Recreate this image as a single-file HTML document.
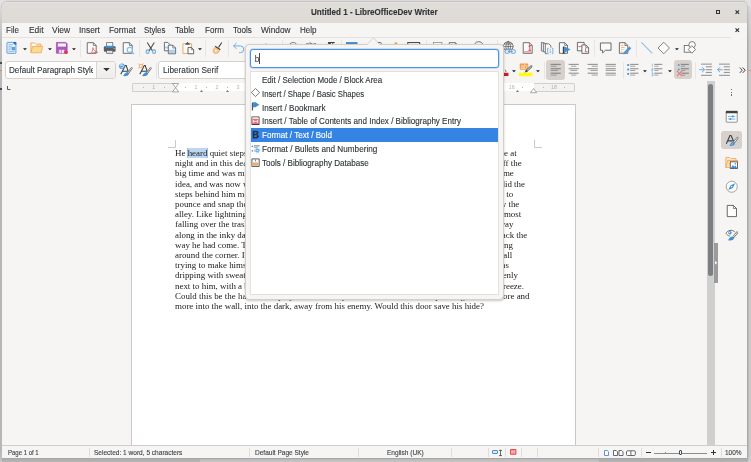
<!DOCTYPE html>
<html><head><meta charset="utf-8"><title>Untitled 1 - LibreOfficeDev Writer</title>
<style>
*{box-sizing:border-box;margin:0;padding:0}
html,body{width:751px;height:462px;overflow:hidden;background:#fff}
body{position:relative;font-family:"Liberation Sans",sans-serif;color:#2e3436}
#shadow{position:absolute;left:0;top:0;width:751px;height:462px;background:#cfcfcf}
.fr{position:absolute}
#win{position:absolute;left:2px;top:2px;width:745px;height:456px;background:#f6f5f4;border-radius:4.5px 4.5px 0 0;overflow:hidden}
#app{position:absolute;left:-2px;top:-2px;width:751px;height:462px;will-change:transform}
.abs,.ic,.sep,.act,.ln,.rn,.rt,.mi,.st{position:absolute}
.ic{overflow:visible}
#title{left:2px;top:2px;width:745px;height:20.8px;background:linear-gradient(#e8e6e3 0,#e0ddd9 1.2px,#dedbd7 100%)}
.ui{position:absolute;line-height:10px;white-space:nowrap;color:#2e3436;-webkit-text-stroke:.1px currentColor}
.t{position:absolute;line-height:10px;color:#2e3436;white-space:nowrap;-webkit-text-stroke:.12px currentColor}
.mi{line-height:10px;white-space:nowrap;color:#2e3436;-webkit-text-stroke:.1px currentColor}
#mline{left:2px;top:36.8px;width:729px;height:1px;background:#e4e2e0}
.sep{width:1px;background:#e8e6e3}
.act{background:#d6d1cc;border-radius:3px}
#combo1{left:4.7px;top:60.6px;width:111.4px;height:18.5px;border:1px solid #d6d2ce;border-radius:3px;background:#fff;overflow:hidden}
#combo1 .tx{position:absolute;left:0;top:0;width:86.9px;height:17px;overflow:hidden}
#combo1 .bt{position:absolute;left:90.4px;top:-1px;width:21px;height:18.5px;border-left:1px solid #d9d5d1;background:linear-gradient(#f6f5f4,#eeecea)}
#combo2{left:158.3px;top:60.6px;width:120px;height:18.5px;border:1px solid #d6d2ce;border-radius:3px;background:#fff}
#combo2 .tx{position:absolute;left:3.8px;top:3.6px;font-size:8.3px;line-height:10px;white-space:nowrap}
/* document area */
#rulerbg{left:174px;top:83.4px;width:361px;height:8px;background:#fff}
#rl{left:132.3px;top:83.2px;width:43px;height:8.6px;background:#f3f2f1;border:1px solid #d2d0cd;border-radius:1.5px 0 0 1.5px;border-right:0}
#rr{left:533.8px;top:83.2px;width:41.5px;height:8.6px;background:#f3f2f1;border:1px solid #d2d0cd;border-radius:0 1.5px 1.5px 0;border-left:0}
.rn{top:84.3px;width:12px;text-align:center;font-size:5.4px;line-height:7px;color:#b2b2b2}
.rt{top:87.4px;width:1px;height:1px;background:#b4b4b4}
#page{left:131.4px;top:104.2px;width:444.6px;height:345px;background:#fff;border:1px solid #c9c9c9}
.ln{left:175.0px;font-family:"Liberation Serif",serif;font-size:8.92px;line-height:10.2px;white-space:nowrap;color:#222}
.lnl{width:150px;overflow:hidden}
.lnr{left:auto}
.sel{background:#bdd6f2;box-shadow:0 0 0 .8px #7fb0ea}
/* scrollbar */
#vtrack{left:706.6px;top:81px;width:8.4px;height:365px;background:#cfcfcf}
#vthumb{left:707.9px;top:83.8px;width:5px;height:192px;background:#7b7f81;border-radius:2.5px}
#handle{left:714.3px;top:242.7px;width:3.5px;height:40px;background:#9b9b9b}
/* status */
#status{left:2px;top:445.4px;width:745px;height:12.6px;background:#f6f5f4;border-top:1px solid #d0cdca}
.st{line-height:8px;white-space:nowrap;color:#3e4345;-webkit-text-stroke:.12px currentColor}
.ssep{position:absolute;top:447.5px;width:1px;height:9px;background:#e0dedb}
/* popup */
#pop{left:244.7px;top:44.3px;width:259.2px;height:255.3px;background:#f6f5f4;border:1px solid #d3d0cc;border-radius:4px;box-shadow:0 1px 2.5px rgba(0,0,0,.22)}
#entry{left:249.8px;top:49.0px;width:249.4px;height:19.1px;background:#fff;border:1.1px solid #4e92e6;border-radius:3px;box-shadow:0 0 0 .5px rgba(90,155,235,.55)}
#entry .tx{position:absolute;left:3.9px;top:4.1px;font-size:8.4px;line-height:10px}
#entry .car{position:absolute;left:8px;top:3.3px;width:.7px;height:10.4px;background:#4a4a4a}
#list{left:249.8px;top:70.9px;width:249.4px;height:224.5px;background:#fff;border:1px solid #e3e1de;overflow:hidden}
.row{position:absolute;left:0;width:247.4px;height:13.9px;font-size:8.4px;line-height:13.9px;white-space:nowrap;color:#2e3436}
.row span{position:absolute;left:11.2px;top:1.5px;display:block;-webkit-text-stroke:.12px currentColor}
.selrow{background:#3584e4;color:#fff}
</style></head><body>
<div id="shadow">
<div class="fr" style="left:0;top:0;width:751px;height:1px;background:#dadada"></div>
<div class="fr" style="left:0;top:1px;width:751px;height:1px;background:#c6c6c6"></div>
<div class="fr" style="left:0;top:0;width:2px;height:462px;background:linear-gradient(#e2e2e2 0,#d2d2d2 14px,#bcbcbc 44px,#b7b7b7 100px,#b7b7b7 452px,#c4c4c4 462px)"></div>
<div class="fr" style="left:747px;top:0;width:1px;height:462px;background:linear-gradient(#d8d8d8 0,#bdbdbd 14px,#a9a9a9 44px,#a8a8a8 456px,#bdbdbd 462px)"></div>
<div class="fr" style="left:748px;top:0;width:1px;height:462px;background:linear-gradient(#dcdcdc 0,#c8c8c8 14px,#bcbcbc 44px,#bbbbbb 456px,#cbcbcb 462px)"></div>
<div class="fr" style="left:749px;top:0;width:2px;height:462px;background:linear-gradient(#e0e0e0 0,#d2d2d2 14px,#cacaca 44px,#c9c9c9 454px,#d6d6d6 462px)"></div>
<div class="fr" style="left:0;top:0;width:6px;height:6px;background:#e2e2e2"></div>
<div class="fr" style="left:745px;top:0;width:6px;height:6px;background:#e2e2e2"></div>
<div class="fr" style="left:1px;top:1px;width:747px;height:9px;border-radius:5.5px 5.5px 0 0;background:linear-gradient(#c4c4c4 0,#c4c4c4 4px,rgba(190,190,190,0) 9px)"></div>
<div class="fr" style="left:2px;top:458px;width:745px;height:1px;background:#a7a7a7"></div>
<div class="fr" style="left:2px;top:459px;width:197.7px;height:3px;background:linear-gradient(#adadad,#b6b6b6)"></div>
<div class="fr" style="left:199.7px;top:459px;width:399.7px;height:3px;background:linear-gradient(#b8b8b8,#c7c7c7)"></div>
<div class="fr" style="left:599.4px;top:459px;width:147.6px;height:3px;background:linear-gradient(#acacac,#b5b5b5)"></div>
<div class="fr" style="left:748px;top:459px;width:3px;height:3px;background:linear-gradient(135deg,#bdbdbd,#dcdcdc)"></div>
<div class="fr" style="left:0;top:62.4px;width:1.6px;height:2px;background:#4a4a4a"></div>
<div class="fr" style="left:0;top:69.6px;width:1.6px;height:1.2px;background:#d9865a"></div>
<div class="fr" style="left:0;top:88.4px;width:1.6px;height:1.4px;background:#3a4a5a"></div>
<div class="fr" style="left:747.6px;top:69.6px;width:3.4px;height:1.2px;background:#e39a78"></div>
</div>
<div id="win"><div id="app">

<div class="abs" id="title"></div>
<!-- window buttons -->
<div class="abs" style="left:715.7px;top:9.9px;width:4.8px;height:4.4px;border:1.3px solid #2e3436"></div>
<svg class="ic" style="left:734.6px;top:9.7px;width:4.6px;height:4.4px" viewBox="0 0 10 10"><path d="M1 1L9 9M9 1L1 9" stroke="#2e3436" stroke-width="2.6"/></svg>
<svg class="ic" style="left:734.6px;top:27.8px;width:4.6px;height:4.4px" viewBox="0 0 10 10"><path d="M1 1L9 9M9 1L1 9" stroke="#2e3436" stroke-width="2.6"/></svg>

<!-- menu -->
<div class="abs" id="mline"></div>

<!-- combos -->
<div class="abs" id="combo1"><div class="tx"><div class="ui" style="left:3.45px;top:3.60px;font-size:8.6px;transform:scaleX(0.9466);transform-origin:0 0">Default Paragraph Style</div></div><div class="bt"></div></div>
<svg class="ic" style="left:103.3px;top:68.1px;width:7px;height:3.3px" viewBox="0 0 10 5"><path d="M0 0H10L5 5Z" fill="#2e3436"/></svg>
<div class="abs" id="combo2"></div>

<!-- toolbars + sidebar icons -->
<svg class="ic" style="left:5.48px;top:41.48px;width:13.44px;height:13.44px" viewBox="0 0 24 24" ><rect x="3.5" y="2.5" width="16" height="19.5" rx="1" fill="#eaf3fc" stroke="#4a8fd0" stroke-width="1.5"/><path d="M6 6.5h8M6 9.5h6M6 12.5h6M6 15.5h4M6 18.5h11" stroke="#7db3e3" stroke-width="1.5"/><rect x="12" y="10.5" width="6" height="6" fill="#5b9bd8"/><circle cx="15.6" cy="12.6" r="1" fill="#f0a24a"/><path d="M14.5 2H20V7.5Z" fill="#2a6fba"/><circle cx="17.6" cy="4.2" r="2.2" fill="#2a6fba"/></svg>
<svg class="ic" style="left:23.05px;top:47.85px;width:3.9px;height:2.4px" viewBox="0 0 10 5.5"><path d="M0 0H10L5 5.5Z" fill="#1b1b1b"/></svg>
<svg class="ic" style="left:30.08px;top:41.48px;width:13.44px;height:13.44px" viewBox="0 0 24 24" ><path d="M1.5 20.5V3.5H8.5L10.5 5.5H19.5V10" fill="#fbdcae" stroke="#f0a050" stroke-width="1.3"/><path d="M3.5 5H11V9.5H3.5Z" fill="#fff"/><path d="M1.5 21L4.8 9.5H22.8L20 21Z" fill="#fbdc8f" stroke="#f0a050" stroke-width="1.3" stroke-linejoin="round"/></svg>
<svg class="ic" style="left:47.65px;top:47.85px;width:3.9px;height:2.4px" viewBox="0 0 10 5.5"><path d="M0 0H10L5 5.5Z" fill="#1b1b1b"/></svg>
<svg class="ic" style="left:54.78px;top:41.48px;width:13.44px;height:13.44px" viewBox="0 0 24 24" ><path d="M2.5 2.5H19.5L21.7 4.7V21.7H2.5Z" fill="#ad57bd" stroke="#9c46ac" stroke-width="1.2" stroke-linejoin="round"/><rect x="5" y="4.4" width="14.6" height="5.6" fill="#fbf5fc"/><rect x="6.4" y="15.2" width="10.8" height="6.3" fill="#c995d4"/><rect x="8" y="16.2" width="2.2" height="5" fill="#fff"/><rect x="12.6" y="16.2" width="3" height="5" fill="#fff"/><circle cx="19.7" cy="20.2" r="3" fill="#ee2b34"/></svg>
<svg class="ic" style="left:71.95px;top:47.85px;width:3.9px;height:2.4px" viewBox="0 0 10 5.5"><path d="M0 0H10L5 5.5Z" fill="#1b1b1b"/></svg>
<div class="sep" style="left:79.80px;top:40px;height:17px"></div>
<svg class="ic" style="left:84.73px;top:41.48px;width:13.44px;height:13.44px" viewBox="0 0 24 24" ><path d="M4 3H15L20 8V22H4Z" fill="#fafafa" stroke="#55585a" stroke-width="1.5" stroke-linejoin="round"/><path d="M15 3V8H20" fill="none" stroke="#55585a" stroke-width="1.2"/><path d="M10 23C13 19.5 14.4 15.5 14.2 11.8C15.2 16.4 18.6 19.4 22.8 20.4C18.2 20.2 13.6 21.2 10 23Z" fill="none" stroke="#e8686e" stroke-width="1.6" stroke-linejoin="round"/></svg>
<svg class="ic" style="left:103.28px;top:41.48px;width:13.44px;height:13.44px" viewBox="0 0 24 24" ><rect x="6.5" y="3" width="11" height="7" fill="#fff" stroke="#5c5f61" stroke-width="1.4"/><rect x="1.5" y="9.5" width="21" height="9.6" rx="1.6" fill="#5c5f61"/><rect x="5" y="8.4" width="14" height="3.8" fill="#3b8fd8"/><rect x="6.5" y="17" width="11" height="5" fill="#fff" stroke="#5c5f61" stroke-width="1.4"/><path d="M8.5 19.6H15.5" stroke="#8a8d8f" stroke-width="1"/><rect x="19" y="12.5" width="1.6" height="1.6" fill="#d8d8d8"/></svg>
<svg class="ic" style="left:121.43px;top:41.48px;width:13.44px;height:13.44px" viewBox="0 0 24 24" ><path d="M4 3H15L20 8V22H4Z" fill="#fafafa" stroke="#55585a" stroke-width="1.5" stroke-linejoin="round"/><path d="M15 3V8H20" fill="none" stroke="#55585a" stroke-width="1.2"/><circle cx="15.6" cy="15.8" r="4.6" fill="#fff" stroke="#86bfe8" stroke-width="2.2"/><path d="M19 19.2L23.2 23.2" stroke="#86bfe8" stroke-width="2.2"/></svg>
<div class="sep" style="left:139.40px;top:40px;height:17px"></div>
<svg class="ic" style="left:144.18px;top:41.48px;width:13.44px;height:13.44px" viewBox="0 0 24 24" ><path d="M5.8 2.6L15.2 17.6M18.4 2.6L9 17.6" stroke="#4a4d4f" stroke-width="1.9" fill="none"/><ellipse cx="6.4" cy="19" rx="2.7" ry="3.1" fill="#eef5fc" stroke="#6aaade" stroke-width="1.9"/><ellipse cx="18" cy="19" rx="2.7" ry="3.1" fill="#eef5fc" stroke="#6aaade" stroke-width="1.9"/></svg>
<svg class="ic" style="left:162.78px;top:41.48px;width:13.44px;height:13.44px" viewBox="0 0 24 24" ><path d="M2.5 2.5H8.5L12 6V17.5H2.5Z" fill="#fafafa" stroke="#55585a" stroke-width="1.5" stroke-linejoin="round"/><rect x="3.6" y="10" width="7.4" height="3.4" fill="#a6d2f2"/><path d="M9.5 7.5H17.5L22.5 12.5V22.8H9.5Z" fill="#fafafa" stroke="#55585a" stroke-width="1.5" stroke-linejoin="round"/><path d="M17.5 7.5V12.5H22.5" fill="none" stroke="#55585a" stroke-width="1.2"/><rect x="10.8" y="15.5" width="10.4" height="6" fill="#a6d2f2"/></svg>
<svg class="ic" style="left:181.03px;top:41.48px;width:13.44px;height:13.44px" viewBox="0 0 24 24" ><path d="M3.5 4.8H19V22.3H3.5Z" fill="#fcfcfc" stroke="#f0a858" stroke-width="1.7" stroke-linejoin="round"/><path d="M7.5 6.6L8.8 3.4H10.2L11.3 2H12.2L13.3 3.4H14.7L16 6.6Z" fill="#55585a"/><path d="M12.5 11.5H18.5L22.6 15.5V22.8H12.5Z" fill="#fcfcfc" stroke="#55585a" stroke-width="1.6" stroke-linejoin="round"/><path d="M18.5 11.5V15.5H22.6" fill="none" stroke="#55585a" stroke-width="1.2"/></svg>
<svg class="ic" style="left:197.55px;top:47.85px;width:3.9px;height:2.4px" viewBox="0 0 10 5.5"><path d="M0 0H10L5 5.5Z" fill="#1b1b1b"/></svg>
<div class="sep" style="left:205.40px;top:40px;height:17px"></div>
<svg class="ic" style="left:209.88px;top:41.48px;width:13.44px;height:13.44px" viewBox="0 0 24 24" ><path d="M21 2.6L15.2 11.4" stroke="#3e4143" stroke-width="1.9"/><path d="M9.8 8.6L19 14.6L17.8 16.4L8.6 10.4Z" fill="#3e4143"/><path d="M8.4 11.4L16.6 16.8C16.6 20.6 13 22.6 8.4 22C4.6 21 4.8 15.4 8.4 11.4Z" fill="#f8c98c" stroke="#f0a050" stroke-width="1.3"/><path d="M9.5 14.5L13.5 17.5L9 19Z" fill="#fff6e8"/></svg>
<div class="sep" style="left:228.30px;top:40px;height:17px"></div>
<svg class="ic" style="left:232.28px;top:41.48px;width:13.44px;height:13.44px" viewBox="0 0 24 24" ><path d="M8.2 3.6L2.8 8.8L8.2 14M2.8 8.8H15A6 6 0 0 1 15 20.8H12.5" fill="none" stroke="#68aade" stroke-width="1.7"/></svg>
<svg class="ic" style="left:256.88px;top:41.48px;width:13.44px;height:13.44px" viewBox="0 0 24 24" ><path d="M16 4.5L20.5 9L16 13.5M20.5 9H10A5.5 5.5 0 0 0 10 20H13" fill="none" stroke="#3d8fd8" stroke-width="1.7"/></svg>
<div class="sep" style="left:281.80px;top:40px;height:17px"></div>
<svg class="ic" style="left:286.68px;top:41.48px;width:13.44px;height:13.44px" viewBox="0 0 24 24" ><circle cx="11" cy="10.6" r="8" fill="none" stroke="#6a6d6f" stroke-width="1.5"/></svg>
<svg class="ic" style="left:304.58px;top:41.48px;width:13.44px;height:13.44px" viewBox="0 0 24 24" ><text x="1" y="11.5" font-family="Liberation Sans" font-size="12" fill="#4a4d4f">abc</text></svg>
<svg class="ic" style="left:322.98px;top:41.48px;width:13.44px;height:13.44px" viewBox="0 0 24 24" ><path d="M9 2.6H21M13 2.6V20M17.4 2.6V20" stroke="#3e4143" stroke-width="1.8" fill="none"/><path d="M13 2.6A5 5 0 0 0 13 12.6Z" fill="#3e4143"/></svg>
<div class="sep" style="left:341.20px;top:40px;height:17px"></div>
<svg class="ic" style="left:345.38px;top:41.48px;width:13.44px;height:13.44px" viewBox="0 0 24 24" ><rect x="2.5" y="2.5" width="19" height="19" fill="#fff" stroke="#55585a"/><rect x="2.4" y="2.2" width="19.2" height="5" fill="#3d8fd8"/></svg>
<svg class="ic" style="left:374.48px;top:41.48px;width:13.44px;height:13.44px" viewBox="0 0 24 24" ><rect x="2" y="2.8" width="11" height="17" rx="1.5" fill="#fafafa" stroke="#55585a" stroke-width="1.6"/></svg>
<svg class="ic" style="left:388.58px;top:41.48px;width:13.44px;height:13.44px" viewBox="0 0 24 24" ><rect x="10" y="2.4" width="4.6" height="18" fill="#f0a24a"/></svg>
<svg class="ic" style="left:407.48px;top:41.48px;width:13.44px;height:13.44px" viewBox="0 0 24 24" ><rect x="1.4" y="2.8" width="21.2" height="17" fill="#fafafa" stroke="#3e4143" stroke-width="1.8"/></svg>
<div class="sep" style="left:425.60px;top:40px;height:17px"></div>
<svg class="ic" style="left:431.18px;top:41.48px;width:13.44px;height:13.44px" viewBox="0 0 24 24" ><rect x="4.5" y="2.6" width="15" height="7" fill="#fafafa" stroke="#85888a" stroke-width="1.3"/></svg>
<svg class="ic" style="left:446.98px;top:41.48px;width:13.44px;height:13.44px" viewBox="0 0 24 24" ><path d="M4 3H15L20 8V22H4Z" fill="#fafafa" stroke="#55585a" stroke-width="1.5" stroke-linejoin="round"/><path d="M15 3V8H20" fill="none" stroke="#55585a" stroke-width="1.2"/></svg>
<svg class="ic" style="left:472.48px;top:41.48px;width:13.44px;height:13.44px" viewBox="0 0 24 24" ><path d="M3 21H9.4V18A8.6 8.6 0 1 1 14.6 18V21H21" fill="none" stroke="#6a6d6f" stroke-width="1.7"/></svg>
<div class="sep" style="left:497.20px;top:40px;height:17px"></div>
<svg class="ic" style="left:503.28px;top:41.48px;width:13.44px;height:13.44px" viewBox="0 0 24 24" ><path d="M1.83 14.7A8.85 8.85 0 1 1 16.77 14.7Z" fill="#fafafa" stroke="#4a4d4f" stroke-width="1.4" stroke-linejoin="round"/><path d="M9.3 1.1V14.7M0.6 10H18M1.8 5.4H16.8" stroke="#4a4d4f" stroke-width="1.2" fill="none"/><path d="M6 14.7C4.2 10 5.4 4 9.3 1.1C13.2 4 14.4 10 12.6 14.7" fill="none" stroke="#4a4d4f" stroke-width="1.2"/><rect x="3.6" y="15.6" width="8.2" height="6.4" rx="3.2" fill="#f6f5f4" stroke="#68a6da" stroke-width="1.8"/><rect x="14" y="15.6" width="8.2" height="6.4" rx="3.2" fill="#f6f5f4" stroke="#68a6da" stroke-width="1.8"/><path d="M8.6 18.8H17.4" stroke="#68a6da" stroke-width="1.8"/></svg>
<svg class="ic" style="left:520.78px;top:41.48px;width:13.44px;height:13.44px" viewBox="0 0 24 24" ><path d="M4 3H15L20 8V22H4Z" fill="#fafafa" stroke="#55585a" stroke-width="1.5" stroke-linejoin="round"/><path d="M15 3V8H20" fill="none" stroke="#55585a" stroke-width="1.2"/><path d="M13.6 10.2L15.8 8.4V16.4M13.2 16.4H18.2" stroke="#e8434c" stroke-width="1.8" fill="none"/><path d="M5.5 19.4H18.5" stroke="#ee7d84" stroke-width="2"/></svg>
<svg class="ic" style="left:539.78px;top:41.48px;width:13.44px;height:13.44px" viewBox="0 0 24 24" ><path d="M2.5 2.5L8 4V19L2.5 17.5Z" fill="#fafafa" stroke="#55585a" stroke-width="1.4" stroke-linejoin="round"/><path d="M6 3.5L12 5V20.5L6 19Z" fill="#fafafa" stroke="#55585a" stroke-width="1.4" stroke-linejoin="round"/><path d="M9.5 5H15.5L19.5 8.5V22.5H9.5Z" fill="#fafafa" stroke="#55585a" stroke-width="1.4" stroke-linejoin="round"/><rect x="12.5" y="12" width="11.5" height="11.5" fill="#f6f5f4"/><path d="M15.4 13H13.6V22.6H15.4M21.2 13H23V22.6H21.2" fill="none" stroke="#5a9fd8" stroke-width="1.4"/><path d="M18.3 14.6V16M18.3 17.4V21.4" stroke="#5a9fd8" stroke-width="1.6"/></svg>
<svg class="ic" style="left:558.08px;top:41.48px;width:13.44px;height:13.44px" viewBox="0 0 24 24" ><path d="M2.5 3H12L17 8V22H2.5Z" fill="#fafafa" stroke="#55585a" stroke-width="1.5" stroke-linejoin="round"/><path d="M12 3V8H17" fill="none" stroke="#55585a" stroke-width="1.2"/><rect x="8.6" y="10" width="3.2" height="13" fill="#3e4143"/><path d="M12 9.6L22.4 15L12 20.4Z" fill="#3d8fd8"/></svg>
<svg class="ic" style="left:576.03px;top:41.48px;width:13.44px;height:13.44px" viewBox="0 0 24 24" ><path d="M2.5 2.5H14.5V17.5H2.5Z" fill="#fafafa" stroke="#55585a" stroke-width="1.5" stroke-linejoin="round"/><path d="M4.2 10H12.8" stroke="#ee5a62" stroke-width="1.7"/><path d="M10.5 7H17.5L22.5 12V22.2H10.5Z" fill="#fafafa" stroke="#55585a" stroke-width="1.5" stroke-linejoin="round"/><path d="M17.5 7V12H22.5" fill="none" stroke="#55585a" stroke-width="1.2"/><path d="M17 13V18" stroke="#55585a" stroke-width="1.2"/><path d="M15.6 19.2H20.8" stroke="#ee5a62" stroke-width="1.8"/></svg>
<div class="sep" style="left:594.30px;top:40px;height:17px"></div>
<svg class="ic" style="left:598.78px;top:41.48px;width:13.44px;height:13.44px" viewBox="0 0 24 24" ><path d="M2.5 3.5H21.5V16.5H11.5L6.5 21.5V16.5H2.5Z" fill="#fafafa" stroke="#5a5d5f" stroke-width="1.6" stroke-linejoin="round"/></svg>
<svg class="ic" style="left:617.78px;top:41.48px;width:13.44px;height:13.44px" viewBox="0 0 24 24" ><path d="M2.5 3H12.5L17.5 8V22H2.5Z" fill="#fafafa" stroke="#55585a" stroke-width="1.5" stroke-linejoin="round"/><path d="M12.5 3V8H17.5" fill="none" stroke="#55585a" stroke-width="1.2"/><path d="M5.5 8H9M10.5 8H12.5M5.5 11.5H12M5.5 15H8M9.5 15H11M5.5 18.5H8" stroke="#f3b06a" stroke-width="1.6"/><path d="M20.5 9.6L23.8 12.8L13.4 23L9.6 23.6L10.4 20Z" fill="#4a96dc"/></svg>
<div class="sep" style="left:635.50px;top:40px;height:17px"></div>
<svg class="ic" style="left:639.98px;top:41.48px;width:13.44px;height:13.44px" viewBox="0 0 24 24" ><path d="M2.5 2.5L22 22" stroke="#8ec0e8" stroke-width="2"/></svg>
<svg class="ic" style="left:657.28px;top:41.48px;width:13.44px;height:13.44px" viewBox="0 0 24 24" ><path d="M12 2.2L22.2 12.5L12 22.8L1.8 12.5Z" fill="#fbfbfb" stroke="#666a6c" stroke-width="1.5" stroke-linejoin="round"/></svg>
<svg class="ic" style="left:674.55px;top:47.85px;width:3.9px;height:2.4px" viewBox="0 0 10 5.5"><path d="M0 0H10L5 5.5Z" fill="#1b1b1b"/></svg>
<svg class="ic" style="left:682.98px;top:41.48px;width:13.44px;height:13.44px" viewBox="0 0 24 24" ><rect x="2.2" y="8" width="12" height="12" fill="#fbfbfb" stroke="#5a5d5f" stroke-width="1.4"/><circle cx="16.2" cy="6.8" r="5.8" fill="#fbfbfb" stroke="#5a5d5f" stroke-width="1.4"/><path d="M15.8 8.6L22.4 15.2L15.8 21.8L9.2 15.2Z" fill="#fbfbfb" stroke="#5a5d5f" stroke-width="1.4"/></svg>
<svg class="ic" style="left:119.18px;top:62.78px;width:13.44px;height:13.44px" viewBox="0 0 24 24" ><path d="M3.2 20.2L11.2 4.6H12.9L16.4 15M6.4 14.7H15.6" fill="none" stroke="#3e4143" stroke-width="1.9"/><path d="M22.6 9.4L16.4 17.6" stroke="#55585a" stroke-width="3.6" stroke-linecap="round"/><path d="M22.6 9.4L16.6 17.2" stroke="#f2f2f2" stroke-width="1.5" stroke-linecap="round"/><path d="M14 16.4L17.8 19.6C16.2 22.9 12 24.2 7.4 23.3C8.4 20.6 10.8 18 14 16.4Z" fill="#3d8fd8"/><circle cx="5.2" cy="5.9" r="5" fill="#4a9be0"/><path d="M3 7.4A2.6 2.6 0 1 0 5 3.4" fill="none" stroke="#fff" stroke-width="1.3"/><path d="M2.4 1.8L6.2 3.6L2.8 5.8Z" fill="#fff"/></svg>
<svg class="ic" style="left:137.58px;top:62.78px;width:13.44px;height:13.44px" viewBox="0 0 24 24" ><path d="M3.2 20.2L11.2 4.6H12.9L16.4 15M6.4 14.7H15.6" fill="none" stroke="#3e4143" stroke-width="1.9"/><path d="M22.6 9.4L16.4 17.6" stroke="#55585a" stroke-width="3.6" stroke-linecap="round"/><path d="M22.6 9.4L16.6 17.2" stroke="#f2f2f2" stroke-width="1.5" stroke-linecap="round"/><path d="M14 16.4L17.8 19.6C16.2 22.9 12 24.2 7.4 23.3C8.4 20.6 10.8 18 14 16.4Z" fill="#3d8fd8"/><rect x="1.4" y="1.6" width="7.4" height="7.4" fill="#f5b988"/><path d="M0.4 0.6L2.2 2.4M9.8 0.6L8 2.4M0.4 10L2.2 8.2M9.8 10L8 8.2" stroke="#f0a050" stroke-width="1.1"/><circle cx="5.1" cy="5.3" r="1.7" fill="#fff"/></svg>
<div class="sep" style="left:155.90px;top:62px;height:17px"></div>
<svg class="ic" style="left:494.58px;top:63.28px;width:13.44px;height:13.44px" viewBox="0 0 24 24" ><path d="M18 12L20 16" fill="none" stroke="#6a6d6f" stroke-width="1.6"/><rect x="0" y="17.5" width="24" height="5.8" fill="#d01c1c"/></svg>
<svg class="ic" style="left:511.80px;top:69.60px;width:3.9px;height:2.4px" viewBox="0 0 10 5.5"><path d="M0 0H10L5 5.5Z" fill="#1b1b1b"/></svg>
<svg class="ic" style="left:518.78px;top:63.28px;width:13.44px;height:13.44px" viewBox="0 0 24 24" ><rect x="1.3" y="0.9" width="15.3" height="11" rx="1" fill="#f39a4a"/><text x="2.6" y="10.2" font-family="Liberation Sans" font-size="11.5" fill="#fde9d6">ab</text><path d="M22 6L13.2 14.4" stroke="#55585a" stroke-width="3.8" stroke-linecap="round"/><path d="M22 6L13.6 14" stroke="#ececec" stroke-width="1.7" stroke-linecap="round"/><path d="M13.4 12L9.6 17.4L16 14.8Z" fill="#3e4143"/><rect x="0" y="17.5" width="24" height="6.1" fill="#ffff00"/></svg>
<svg class="ic" style="left:536.45px;top:69.60px;width:3.9px;height:2.4px" viewBox="0 0 10 5.5"><path d="M0 0H10L5 5.5Z" fill="#1b1b1b"/></svg>
<div class="sep" style="left:544.10px;top:62px;height:17px"></div>
<div class="act" style="left:546.3px;top:60.3px;width:18.5px;height:19.4px"></div>
<svg class="ic" style="left:549.08px;top:63.28px;width:13.44px;height:13.44px" viewBox="0 0 24 24" ><path d="M2.9 2.4H21.1" stroke="#55585a" stroke-width="1.25"/><path d="M2.9 5.8H13.8" stroke="#808385" stroke-width="1.25"/><path d="M2.9 10.3H21.1" stroke="#55585a" stroke-width="1.25"/><path d="M2.9 13.4H16" stroke="#808385" stroke-width="1.25"/><path d="M2.9 18.2H21.1" stroke="#55585a" stroke-width="1.25"/><path d="M2.9 21.6H13.8" stroke="#808385" stroke-width="1.25"/></svg>
<svg class="ic" style="left:567.48px;top:63.28px;width:13.44px;height:13.44px" viewBox="0 0 24 24" ><path d="M3 2.4H21" stroke="#55585a" stroke-width="1.25"/><path d="M7.2 5.8H16.8" stroke="#808385" stroke-width="1.25"/><path d="M3 10.3H21" stroke="#55585a" stroke-width="1.25"/><path d="M6 13.4H18" stroke="#808385" stroke-width="1.25"/><path d="M3 18.2H21" stroke="#55585a" stroke-width="1.25"/><path d="M7.2 21.6H16.8" stroke="#808385" stroke-width="1.25"/></svg>
<svg class="ic" style="left:585.98px;top:63.28px;width:13.44px;height:13.44px" viewBox="0 0 24 24" ><path d="M2.9 2.4H21.1" stroke="#55585a" stroke-width="1.25"/><path d="M10.2 5.8H21.1" stroke="#808385" stroke-width="1.25"/><path d="M2.9 10.3H21.1" stroke="#55585a" stroke-width="1.25"/><path d="M8 13.4H21.1" stroke="#808385" stroke-width="1.25"/><path d="M2.9 18.2H21.1" stroke="#55585a" stroke-width="1.25"/><path d="M10.2 21.6H21.1" stroke="#808385" stroke-width="1.25"/></svg>
<svg class="ic" style="left:604.28px;top:63.28px;width:13.44px;height:13.44px" viewBox="0 0 24 24" ><path d="M2.9 2.4H21.1" stroke="#55585a" stroke-width="1.25"/><path d="M2.9 5.8H21.1" stroke="#808385" stroke-width="1.25"/><path d="M2.9 10.3H21.1" stroke="#55585a" stroke-width="1.25"/><path d="M2.9 13.4H21.1" stroke="#808385" stroke-width="1.25"/><path d="M2.9 18.2H21.1" stroke="#55585a" stroke-width="1.25"/><path d="M2.9 21.6H21.1" stroke="#808385" stroke-width="1.25"/></svg>
<div class="sep" style="left:622.50px;top:62px;height:17px"></div>
<svg class="ic" style="left:625.78px;top:63.28px;width:13.44px;height:13.44px" viewBox="0 0 24 24" ><rect x="2.2" y="1.9000000000000001" width="3.4" height="3.4" fill="#4a96dc"/><rect x="2.2" y="9.9" width="3.4" height="3.4" fill="#4a96dc"/><rect x="2.2" y="17.7" width="3.4" height="3.4" fill="#4a96dc"/><path d="M7.4 2.4H22.2" stroke="#55585a" stroke-width="1.25"/><path d="M7.4 5.8H16.5" stroke="#808385" stroke-width="1.25"/><path d="M7.4 10.3H22.2" stroke="#55585a" stroke-width="1.25"/><path d="M7.4 13.4H16.5" stroke="#808385" stroke-width="1.25"/><path d="M7.4 18.2H22.2" stroke="#55585a" stroke-width="1.25"/><path d="M7.4 21.6H16.5" stroke="#808385" stroke-width="1.25"/></svg>
<svg class="ic" style="left:643.45px;top:69.60px;width:3.9px;height:2.4px" viewBox="0 0 10 5.5"><path d="M0 0H10L5 5.5Z" fill="#1b1b1b"/></svg>
<svg class="ic" style="left:650.48px;top:63.28px;width:13.44px;height:13.44px" viewBox="0 0 24 24" ><path d="M4.2 1.2V6.4M3 9.6H5.2V12H3V14.4H5.4M3 17.4H5.2V23H3M3 20.2H5.2" fill="none" stroke="#6aa8de" stroke-width="1.2"/><path d="M7.7 2.4H22" stroke="#55585a" stroke-width="1.25"/><path d="M7.7 5.8H15.2" stroke="#808385" stroke-width="1.25"/><path d="M7.7 10.3H22" stroke="#55585a" stroke-width="1.25"/><path d="M7.7 13.4H15.2" stroke="#808385" stroke-width="1.25"/><path d="M7.7 18.2H22" stroke="#55585a" stroke-width="1.25"/><path d="M7.7 21.6H15.2" stroke="#808385" stroke-width="1.25"/></svg>
<svg class="ic" style="left:667.80px;top:69.60px;width:3.9px;height:2.4px" viewBox="0 0 10 5.5"><path d="M0 0H10L5 5.5Z" fill="#1b1b1b"/></svg>
<div class="act" style="left:673.7px;top:60.2px;width:18.3px;height:19.3px"></div>
<svg class="ic" style="left:675.68px;top:63.28px;width:13.44px;height:13.44px" viewBox="0 0 24 24" ><rect x="3.4" y="2.1" width="3" height="3" fill="#4a96dc"/><rect x="3.4" y="10.1" width="3" height="3" fill="#4a96dc"/><path d="M8.6 2.4H23" stroke="#55585a" stroke-width="1.25"/><path d="M8.6 5.8H16.4" stroke="#808385" stroke-width="1.25"/><path d="M8.6 10.3H23" stroke="#55585a" stroke-width="1.25"/><path d="M10 13.4H16.4" stroke="#808385" stroke-width="1.25"/><path d="M9.5 18.2H23" stroke="#55585a" stroke-width="1.25"/><path d="M10.5 21.6H16.4" stroke="#808385" stroke-width="1.25"/><path d="M1.6 14.2L10.8 23.6M10.8 14.2L1.6 23.6" stroke="#e9747b" stroke-width="1.9"/></svg>
<div class="sep" style="left:694.50px;top:62px;height:17px"></div>
<svg class="ic" style="left:699.18px;top:62.88px;width:13.44px;height:13.44px" viewBox="0 0 24 24" ><path d="M3.6 2H23" stroke="#85888a" stroke-width="1.7"/><path d="M12.2 6.8H23" stroke="#85888a" stroke-width="1.7"/><path d="M12.2 12H23" stroke="#85888a" stroke-width="1.7"/><path d="M12.2 16.8H23" stroke="#85888a" stroke-width="1.7"/><path d="M3.6 22H23" stroke="#85888a" stroke-width="1.7"/><path d="M0.6 12H9.6M5.6 7.6L10 12L5.6 16.4" fill="none" stroke="#5aa0d8" stroke-width="1.6"/></svg>
<svg class="ic" style="left:717.28px;top:62.88px;width:13.44px;height:13.44px" viewBox="0 0 24 24" ><path d="M3.6 2H23" stroke="#85888a" stroke-width="1.7"/><path d="M12.2 6.8H23" stroke="#85888a" stroke-width="1.7"/><path d="M12.2 12H23" stroke="#85888a" stroke-width="1.7"/><path d="M12.2 16.8H23" stroke="#85888a" stroke-width="1.7"/><path d="M3.6 22H23" stroke="#85888a" stroke-width="1.7"/><path d="M1 12H10M5.4 7.6L1 12L5.4 16.4" fill="none" stroke="#5aa0d8" stroke-width="1.6"/></svg>
<svg class="ic" style="left:724.88px;top:110.28px;width:13.44px;height:13.44px" viewBox="0 0 24 24" ><rect x="2.2" y="2.5" width="19.6" height="19.3" rx="1" fill="#fdfdfd" stroke="#6a6d6f" stroke-width="1.3"/><rect x="1.6" y="1.6" width="20.8" height="4.2" fill="#3e4143"/><path d="M5.5 11.4H18.5M5.5 16.2H18.5" stroke="#4a96dc" stroke-width="1.3"/><rect x="12.6" y="9.6" width="2.6" height="3.6" fill="#4a96dc"/><rect x="8.4" y="14.4" width="2.6" height="3.6" fill="#4a96dc"/></svg>
<div class="act" style="left:721.2px;top:130.6px;width:20.4px;height:18.6px"></div>
<svg class="ic" style="left:724.88px;top:133.28px;width:13.44px;height:13.44px" viewBox="0 0 24 24" ><path d="M2.4 19.2L8.8 4.4H10.8L15.4 15M5.2 14H13.6" fill="none" stroke="#3e4143" stroke-width="2"/><path d="M22.4 8.6L16.6 16.4" stroke="#6a6d6f" stroke-width="3.8" stroke-linecap="round"/><path d="M22.4 8.6L16.8 16" stroke="#f4f4f4" stroke-width="1.7" stroke-linecap="round"/><path d="M13.6 15.6L17.8 19C16.4 22.2 12.6 23.6 8.2 22.8C9 20 10.8 17.4 13.6 15.6Z" fill="#3d8fd8"/><path d="M11 20.4C12.4 20.4 13.6 19.6 14.4 18.6" stroke="#cfe4f8" stroke-width="1" fill="none"/></svg>
<svg class="ic" style="left:724.88px;top:156.48px;width:13.44px;height:13.44px" viewBox="0 0 24 24" ><path d="M1.5 20.5V2.5H8.5L10.5 4.5H19.5V8" fill="#fde8c6" stroke="#f0a050" stroke-width="1.4"/><path d="M1.5 20.5L4.5 8H23L21.5 12" fill="#fbdca4" stroke="#f0a050" stroke-width="1.4" stroke-linejoin="round"/><path d="M1.5 20.5H9" stroke="#f0a050" stroke-width="1.4"/><rect x="9.4" y="10.4" width="13" height="12" fill="#fdfdfd" stroke="#4a4d4f" stroke-width="1.5"/><path d="M10.4 21.4L14 16L16.6 19L18.8 17L21.4 21.4Z" fill="#3d8fd8"/><circle cx="18.6" cy="13.8" r="1.4" fill="#3d8fd8"/></svg>
<svg class="ic" style="left:725.28px;top:179.78px;width:13.44px;height:13.44px" viewBox="0 0 24 24" ><circle cx="12" cy="12" r="9.9" fill="#fdfdfd" stroke="#808385" stroke-width="1.3"/><path d="M18 6L14.2 14.2L6 18L9.8 9.8Z" fill="#3d8fd8"/><circle cx="12" cy="12" r="1.4" fill="#fff"/></svg>
<svg class="ic" style="left:724.88px;top:203.58px;width:13.44px;height:13.44px" viewBox="0 0 24 24" ><path d="M4 2.5H15.0L20.5 8.0V22.5H4Z" fill="#fdfdfd" stroke="#4a4d4f" stroke-width="1.5" stroke-linejoin="round"/><path d="M15.0 2.5V8.0H20.5" fill="none" stroke="#4a4d4f" stroke-width="1.2"/></svg>
<svg class="ic" style="left:725.28px;top:227.58px;width:13.44px;height:13.44px" viewBox="0 0 24 24" ><path d="M1.6 9.6C5 3.6 12.5 2.6 17.4 6.8" fill="none" stroke="#5a5d5f" stroke-width="1.6"/><path d="M1.6 9.6C3.6 12.6 6.2 14.2 9.4 14.6" fill="none" stroke="#5a5d5f" stroke-width="1.3"/><circle cx="8.8" cy="8.6" r="3.1" fill="#4a96dc"/><circle cx="7.9" cy="7.7" r="1.1" fill="#fff"/><path d="M21.6 8L15 16.4" stroke="#6a6d6f" stroke-width="3.8" stroke-linecap="round"/><path d="M21.6 8L15.2 16" stroke="#f4f4f4" stroke-width="1.7" stroke-linecap="round"/><path d="M12 15.2L16.2 18.8C14.8 21.8 11 23 5.6 22C7 19 9 16.6 12 15.2Z" fill="#3d8fd8"/></svg>
<!-- chevron -->
<svg class="ic" style="left:738.8px;top:66.6px;width:7px;height:6.4px" viewBox="0 0 14 13"><path d="M1.5 1L6.5 6.5L1.5 12M7.5 1L12.5 6.5L7.5 12" fill="none" stroke="#3e4143" stroke-width="2"/></svg>
<!-- sidebar kebab -->
<div class="abs" style="left:730.8px;top:88.6px;width:1.2px;height:1.2px;background:#6e6e6e"></div>
<div class="abs" style="left:730.8px;top:91.5px;width:1.2px;height:1.2px;background:#6e6e6e"></div>
<div class="abs" style="left:730.8px;top:94.4px;width:1.2px;height:1.2px;background:#6e6e6e"></div>

<!-- ruler -->
<svg class="ic" style="left:6.6px;top:85.6px;width:3.4px;height:4px" viewBox="0 0 3.4 4"><path d="M.5 0V3.5H3.4" fill="none" stroke="#555" stroke-width="1"/></svg>
<div class="abs" id="rulerbg"></div><div class="abs" id="rl"></div><div class="abs" id="rr"></div>
<div class="rn" style="left:147.84px">1</div>
<div class="rn" style="left:189.96px">1</div>
<div class="rn" style="left:211.02px">2</div>
<div class="rn" style="left:232.08px">3</div>
<div class="rn" style="left:253.14px">4</div>
<div class="rn" style="left:274.20px">5</div>
<div class="rn" style="left:295.26px">6</div>
<div class="rn" style="left:316.32px">7</div>
<div class="rn" style="left:337.38px">8</div>
<div class="rn" style="left:358.44px">9</div>
<div class="rn" style="left:379.50px">10</div>
<div class="rn" style="left:400.56px">11</div>
<div class="rn" style="left:421.62px">12</div>
<div class="rn" style="left:442.68px">13</div>
<div class="rn" style="left:463.74px">14</div>
<div class="rn" style="left:484.80px">15</div>
<div class="rn" style="left:505.86px">16</div>
<div class="rn" style="left:547.98px">18</div>
<div class="rt" style="left:142.81px"></div>
<div class="rt" style="left:163.87px"></div>
<div class="rt" style="left:184.93px"></div>
<div class="rt" style="left:205.99px"></div>
<div class="rt" style="left:227.05px"></div>
<div class="rt" style="left:248.11px"></div>
<div class="rt" style="left:269.17px"></div>
<div class="rt" style="left:290.23px"></div>
<div class="rt" style="left:311.29px"></div>
<div class="rt" style="left:332.35px"></div>
<div class="rt" style="left:353.41px"></div>
<div class="rt" style="left:374.47px"></div>
<div class="rt" style="left:395.53px"></div>
<div class="rt" style="left:416.59px"></div>
<div class="rt" style="left:437.65px"></div>
<div class="rt" style="left:458.71px"></div>
<div class="rt" style="left:479.77px"></div>
<div class="rt" style="left:500.83px"></div>
<div class="rt" style="left:521.89px"></div>
<div class="rt" style="left:542.95px"></div>
<div class="rt" style="left:564.01px"></div>
<svg class="ic" style="left:199.72px;top:90.3px;width:3px;height:2px" viewBox="0 0 3 2"><path d="M0 2L1.5 0L3 2Z" fill="#777"/></svg>
<svg class="ic" style="left:226.05px;top:90.3px;width:3px;height:2px" viewBox="0 0 3 2"><path d="M0 2L1.5 0L3 2Z" fill="#777"/></svg>
<svg class="ic" style="left:252.38px;top:90.3px;width:3px;height:2px" viewBox="0 0 3 2"><path d="M0 2L1.5 0L3 2Z" fill="#777"/></svg>
<svg class="ic" style="left:278.70px;top:90.3px;width:3px;height:2px" viewBox="0 0 3 2"><path d="M0 2L1.5 0L3 2Z" fill="#777"/></svg>
<svg class="ic" style="left:305.02px;top:90.3px;width:3px;height:2px" viewBox="0 0 3 2"><path d="M0 2L1.5 0L3 2Z" fill="#777"/></svg>
<svg class="ic" style="left:331.35px;top:90.3px;width:3px;height:2px" viewBox="0 0 3 2"><path d="M0 2L1.5 0L3 2Z" fill="#777"/></svg>
<svg class="ic" style="left:357.67px;top:90.3px;width:3px;height:2px" viewBox="0 0 3 2"><path d="M0 2L1.5 0L3 2Z" fill="#777"/></svg>
<svg class="ic" style="left:384.00px;top:90.3px;width:3px;height:2px" viewBox="0 0 3 2"><path d="M0 2L1.5 0L3 2Z" fill="#777"/></svg>
<svg class="ic" style="left:410.32px;top:90.3px;width:3px;height:2px" viewBox="0 0 3 2"><path d="M0 2L1.5 0L3 2Z" fill="#777"/></svg>
<svg class="ic" style="left:436.65px;top:90.3px;width:3px;height:2px" viewBox="0 0 3 2"><path d="M0 2L1.5 0L3 2Z" fill="#777"/></svg>
<svg class="ic" style="left:462.98px;top:90.3px;width:3px;height:2px" viewBox="0 0 3 2"><path d="M0 2L1.5 0L3 2Z" fill="#777"/></svg>
<svg class="ic" style="left:489.30px;top:90.3px;width:3px;height:2px" viewBox="0 0 3 2"><path d="M0 2L1.5 0L3 2Z" fill="#777"/></svg>
<svg class="ic" style="left:515.62px;top:90.3px;width:3px;height:2px" viewBox="0 0 3 2"><path d="M0 2L1.5 0L3 2Z" fill="#777"/></svg>
<svg class="ic" style="left:171.6px;top:83.4px;width:7.2px;height:9.4px" viewBox="0 0 7.2 9.4"><path d="M.5 .5H6.7L3.6 4.7Z M3.6 4.7L6.7 8.9H.5Z" fill="#fff" stroke="#858585" stroke-width=".7" stroke-linejoin="round"/></svg>
<svg class="ic" style="left:530.2px;top:87.6px;width:7.2px;height:5.2px" viewBox="0 0 7.2 5.2"><path d="M3.6 .5L6.7 4.7H.5Z" fill="#fff" stroke="#858585" stroke-width=".7" stroke-linejoin="round"/></svg>

<!-- page -->
<div class="abs" id="page"></div>
<svg class="ic" style="left:168px;top:139.6px;width:8px;height:8px" viewBox="0 0 8 8"><path d="M0 7.5H7.5V0" fill="none" stroke="#c8c8c8" stroke-width="1"/></svg>
<svg class="ic" style="left:533.6px;top:139.6px;width:8px;height:8px" viewBox="0 0 8 8"><path d="M8 7.5H.5V0" fill="none" stroke="#c8c8c8" stroke-width="1"/></svg>
<div class="ln lnl" style="top:147.90px">He <span class="sel">heard</span> quiet steps behind him. That didn't bode well. Who could be following him this late at</div>
<div class="ln lnr" style="top:147.90px;right:234.40px">this late at</div>
<div class="ln lnl" style="top:158.10px">night and in this deadbeat part of town? And at this particular moment, just after he pulled off the</div>
<div class="ln lnr" style="top:158.10px;right:229.30px">pulled off the</div>
<div class="ln lnl" style="top:168.30px">big time and was making off with the greenbacks. Was there another crook who'd had the same</div>
<div class="ln lnr" style="top:168.30px;right:237.20px">had the same</div>
<div class="ln lnl" style="top:178.50px">idea, and was now watching him and waiting for a chance to grab the fruit of his labor? Or did the</div>
<div class="ln lnr" style="top:178.50px;right:226.00px">Or did the</div>
<div class="ln lnl" style="top:188.70px">steps behind him mean that one of many law officers in town was on to him and just waiting to</div>
<div class="ln lnr" style="top:188.70px;right:237.90px">just waiting to</div>
<div class="ln lnl" style="top:198.90px">pounce and snap those cuffs on his wrists? He nervously looked all around. Suddenly he saw the</div>
<div class="ln lnr" style="top:198.90px;right:231.70px">he saw the</div>
<div class="ln lnl" style="top:209.10px">alley. Like lightning he darted off to the left and disappeared between the two warehouses almost</div>
<div class="ln lnr" style="top:209.10px;right:229.80px">two warehouses almost</div>
<div class="ln lnl" style="top:219.30px">falling over the trash can lying in the middle of the sidewalk. He tried to nervously tap his way</div>
<div class="ln lnr" style="top:219.30px;right:237.50px">tap his way</div>
<div class="ln lnl" style="top:229.50px">along in the inky darkness and suddenly stiffened: it was a dead-end, he would have to go back the</div>
<div class="ln lnr" style="top:229.50px;right:223.75px">go back the</div>
<div class="ln lnl" style="top:239.70px">way he had come. The steps got louder and louder, he saw a black outline of a figure coming</div>
<div class="ln lnr" style="top:239.70px;right:238.10px">a figure coming</div>
<div class="ln lnl" style="top:249.90px">around the corner. Is this the end of the line? he thought pressing himself back against the wall</div>
<div class="ln lnr" style="top:249.90px;right:238.80px">against the wall</div>
<div class="ln lnl" style="top:260.10px">trying to make himself invisible in the dark, was all that planning and energy wasted? He was</div>
<div class="ln lnr" style="top:260.10px;right:242.10px">wasted? He was</div>
<div class="ln lnl" style="top:270.30px">dripping with sweat now, cold and wet, he could smell the fear coming off his clothes. Suddenly</div>
<div class="ln lnr" style="top:270.30px;right:233.00px">his clothes. Suddenly</div>
<div class="ln lnl" style="top:280.50px">next to him, with a barely noticeable squeak, a door swung quietly to and fro in the night's breeze.</div>
<div class="ln lnr" style="top:280.50px;right:227.00px">the night's breeze.</div>
<div class="ln" style="top:290.70px;word-spacing:0.031px">Could this be the haven he'd prayed for? Slowly he slid toward the door, pressing himself more and</div>
<div class="ln" style="top:300.90px">more into the wall, into the dark, away from his enemy. Would this door save his hide?</div>

<!-- scrollbar -->
<div class="abs" id="vtrack"></div><div class="abs" id="vthumb"></div>
<div class="abs" id="handle"></div>
<svg class="ic" style="left:715px;top:260.6px;width:2.4px;height:3.4px" viewBox="0 0 2.4 3.4"><path d="M0 0L2.4 1.7L0 3.4Z" fill="#fff"/></svg>

<!-- status bar -->
<div class="abs" id="status"></div>

<div class="ssep" style="left:89.1px"></div>
<div class="ssep" style="left:249.4px"></div>
<div class="ssep" style="left:358.2px"></div>
<div class="ssep" style="left:450.6px"></div>
<div class="ssep" style="left:488.2px"></div>
<div class="ssep" style="left:504.5px"></div>
<div class="ssep" style="left:520.7px"></div>
<div class="ssep" style="left:537.2px"></div>
<div class="ssep" style="left:598.1px"></div>
<div class="ssep" style="left:641.0px"></div>
<div class="ssep" style="left:720.8px"></div>
<!-- status icons -->
<div class="abs" style="left:492.2px;top:450.2px;width:6px;height:4.2px;border:1.1px solid #4a8fd0;border-radius:1px;background:#dcebf8"></div>
<svg class="ic" style="left:499px;top:449.5px;width:3px;height:6px" viewBox="0 0 3 6"><path d="M0 .4H3M0 5.6H3M1.5 .4V5.6" stroke="#3e4143" stroke-width=".8" fill="none"/></svg>
<svg class="ic" style="left:510.3px;top:449px;width:6.4px;height:5.8px" viewBox="0 0 6.4 5.8"><rect x="0" y="0" width="6.4" height="5.8" rx=".8" fill="#e2474e"/><path d="M1.4 1.4H2.6V4.4H1.4ZM3.8 1.4H5V4.4H3.8ZM1.4 2.9H5" stroke="#fbd5d7" stroke-width=".7" fill="none"/></svg>
<svg class="ic" style="left:604.4px;top:449.8px;width:5px;height:6px" viewBox="0 0 5 6"><path d="M.5 .5H3.2L4.5 1.8V5.5H.5Z" fill="#fff" stroke="#4a8fd0" stroke-width=".9"/></svg>
<svg class="ic" style="left:613px;top:449.8px;width:10.4px;height:6px" viewBox="0 0 10.4 6"><path d="M.5 .5H3.2L4.5 1.8V5.5H.5Z M6 .5H8.7L10 1.8V5.5H6Z" fill="#fff" stroke="#55585a" stroke-width=".9"/></svg>
<svg class="ic" style="left:625.8px;top:449.8px;width:9.8px;height:6px" viewBox="0 0 9.8 6"><path d="M4.9 .8V5.5H1.6Q.5 5.5 .5 4.4V1.9Q.5 .8 1.6 .8Z M4.9 .8H8.2Q9.3 .8 9.3 1.9V4.4Q9.3 5.5 8.2 5.5H4.9" fill="#fff" stroke="#55585a" stroke-width=".9"/></svg>
<div class="abs" style="left:646.2px;top:452.3px;width:4.9px;height:1.2px;background:#2e3436"></div>
<div class="abs" style="left:654.3px;top:452.6px;width:53.2px;height:.7px;background:#8a8d8f"></div>
<div class="abs" style="left:664.7px;top:451.6px;width:.8px;height:2.6px;background:#8a8d8f"></div>
<div class="abs" style="left:679.2px;top:449.6px;width:3.2px;height:5.8px;background:#f0f0f0;border:.9px solid #4a4d4f;border-radius:1px"></div>
<div class="abs" style="left:711.1px;top:452.3px;width:4.9px;height:1.2px;background:#2e3436"></div>
<div class="abs" style="left:712.95px;top:450.45px;width:1.2px;height:4.9px;background:#2e3436"></div>
<div class="t" style="left:311.00px;top:7.2px;font-size:8.3px;font-weight:bold;transform:scaleX(0.9714);transform-origin:0 0;">Untitled 1 - LibreOfficeDev Writer</div>
<div class="mi" style="left:6.30px;top:25.35px;font-size:8.4px;transform:scaleX(0.9556);transform-origin:0 0;">File</div>
<div class="mi" style="left:28.60px;top:25.35px;font-size:8.4px;transform:scaleX(1.0043);transform-origin:0 0;">Edit</div>
<div class="mi" style="left:51.60px;top:25.35px;font-size:8.4px;transform:scaleX(1.0102);transform-origin:0 0;">View</div>
<div class="mi" style="left:78.80px;top:25.35px;font-size:8.4px;transform:scaleX(0.9975);transform-origin:0 0;">Insert</div>
<div class="mi" style="left:109.00px;top:25.35px;font-size:8.4px;transform:scaleX(0.9988);transform-origin:0 0;">Format</div>
<div class="mi" style="left:144.40px;top:25.35px;font-size:8.4px;transform:scaleX(0.9381);transform-origin:0 0;">Styles</div>
<div class="mi" style="left:175.20px;top:25.35px;font-size:8.4px;transform:scaleX(0.9785);transform-origin:0 0;">Table</div>
<div class="mi" style="left:204.50px;top:25.35px;font-size:8.4px;transform:scaleX(0.9669);transform-origin:0 0;">Form</div>
<div class="mi" style="left:232.90px;top:25.35px;font-size:8.4px;transform:scaleX(0.9610);transform-origin:0 0;">Tools</div>
<div class="mi" style="left:261.10px;top:25.35px;font-size:8.4px;transform:scaleX(0.9900);transform-origin:0 0;">Window</div>
<div class="mi" style="left:299.60px;top:25.35px;font-size:8.4px;transform:scaleX(0.9632);transform-origin:0 0;">Help</div>
<div class="st" style="left:7.50px;top:448.7px;font-size:6.9px;transform:scaleX(0.8709);transform-origin:0 0;">Page 1 of 1</div>
<div class="st" style="left:94.40px;top:448.7px;font-size:6.9px;transform:scaleX(0.9497);transform-origin:0 0;">Selected: 1 word, 5 characters</div>
<div class="st" style="left:254.50px;top:448.7px;font-size:6.9px;transform:scaleX(0.9461);transform-origin:0 0;">Default Page Style</div>
<div class="st" style="left:386.80px;top:448.7px;font-size:6.9px;transform:scaleX(0.9512);transform-origin:0 0;">English (UK)</div>
<div class="st" style="left:724.60px;top:448.7px;font-size:6.9px;transform:scaleX(0.9418);transform-origin:0 0;">100%</div>
<div class="ui" style="left:163.00px;top:65.2px;font-size:8.6px;transform:scaleX(0.9583);transform-origin:0 0;">Liberation Serif</div>
<!-- popup -->
<div class="abs" id="pop"></div>
<svg class="ic" style="left:367.4px;top:37.4px;width:12.6px;height:8.2px" viewBox="0 0 12.6 8.2"><path d="M.3 7.4L6.6 .7L12.3 7.4V8.2H.3Z" fill="#f6f5f4"/><path d="M.3 7.4L6.6 .7L12.3 7.4" fill="none" stroke="#d2cfcb" stroke-width=".9"/></svg>
<div class="abs" id="entry"><div class="tx">b</div><div class="car"></div></div>
<div class="abs" id="list">
<div class="row" style="top:0.35px"><span style="transform:scaleX(0.9528);transform-origin:0 0">Edit / Selection Mode / Block Area</span></div>
<div class="row" style="top:14.25px"><svg class="ic" style="left:0.7px;top:2.0px;width:9px;height:9px" viewBox="0 0 16 16"><path d="M8 0.8L15.4 8L8 15.2L0.6 8Z" fill="#fdfdfd" stroke="#55585a" stroke-width="1.4" stroke-linejoin="round"/></svg><span style="transform:scaleX(0.9253);transform-origin:0 0">Insert / Shape / Basic Shapes</span></div>
<div class="row" style="top:28.15px"><svg class="ic" style="left:0.7px;top:2.0px;width:9px;height:9px" viewBox="0 0 16 16"><path d="M2.6 1V15" stroke="#55585a" stroke-width="2.2"/><path d="M3.6 0.6H8L15 5L8 9.4H3.6Z" fill="#3d8fd8"/></svg><span style="transform:scaleX(0.9674);transform-origin:0 0">Insert / Bookmark</span></div>
<div class="row" style="top:42.05px"><svg class="ic" style="left:0.7px;top:2.0px;width:9px;height:9px" viewBox="0 0 16 16"><path d="M1.5 1.5H14.5V15H1.5Z" fill="#fdfdfd" stroke="#4a4d4f" stroke-width="1.5" stroke-linejoin="round"/><rect x="2.2" y="5" width="11.6" height="9" fill="#ee6a72"/><path d="M4.5 7V12M11.5 7V12M4.5 9.5H11.5" stroke="#fff" stroke-width="1.4" fill="none"/><path d="M1.5 15H14.5" stroke="#3e4143" stroke-width="1.8"/></svg><span style="transform:scaleX(0.9608);transform-origin:0 0">Insert / Table of Contents and Index / Bibliography Entry</span></div>
<div class="row selrow" style="top:55.95px"><svg class="ic" style="left:0.7px;top:2.0px;width:9px;height:9px" viewBox="0 0 16 16"><path d="M3 1.2H8.9C11.9 1.2 13.3 2.9 13.3 4.9C13.3 6.5 12.5 7.5 11.1 7.9C12.9 8.2 14 9.5 14 11.2C14 13.5 12.3 14.9 9.4 14.9H3ZM6 3.8V6.8H8.3C9.5 6.8 10.2 6.3 10.2 5.3C10.2 4.3 9.5 3.8 8.3 3.8ZM6 9.2V12.4H8.8C10.1 12.4 10.8 11.9 10.8 10.8C10.8 9.7 10.1 9.2 8.8 9.2Z" fill="#26303f" fill-rule="evenodd"/></svg><span style="transform:scaleX(0.9646);transform-origin:0 0">Format / Text / Bold</span></div>
<div class="row" style="top:69.85px"><svg class="ic" style="left:0.7px;top:2.0px;width:9px;height:9px" viewBox="0 0 16 16"><rect x="1.2" y="3" width="2.4" height="2.4" fill="#3d8fd8"/><rect x="1.2" y="11" width="2.4" height="2.4" fill="#3d8fd8"/><path d="M5 3.4H15.4" stroke="#55585a" stroke-width="1.5"/><path d="M5 6.6H12" stroke="#8a8d8f" stroke-width="1.3"/><path d="M5 12.2H8" stroke="#8a8d8f" stroke-width="1.3"/><circle cx="11.4" cy="11.4" r="3.2" fill="#6ab0e8"/><circle cx="11.4" cy="11.4" r="4.3" fill="none" stroke="#6ab0e8" stroke-width="1.6" stroke-dasharray="1.7 1.7"/><circle cx="11.4" cy="11.4" r="1.2" fill="#e8f3fc"/></svg><span style="transform:scaleX(0.9752);transform-origin:0 0">Format / Bullets and Numbering</span></div>
<div class="row" style="top:83.75px"><svg class="ic" style="left:0.7px;top:2.0px;width:9px;height:9px" viewBox="0 0 16 16"><path d="M1.6 1.6H14.6V15H1.6Z" fill="#fdfdfd" stroke="#4a4d4f" stroke-width="1.6" stroke-linejoin="round"/><rect x="3.4" y="8" width="9.4" height="5.6" fill="#f5a660"/><rect x="7" y="2.4" width="1.8" height="3.6" fill="#3d8fd8"/></svg><span style="transform:scaleX(0.9638);transform-origin:0 0">Tools / Bibliography Database</span></div>
</div>

</div></div>
</body></html>
